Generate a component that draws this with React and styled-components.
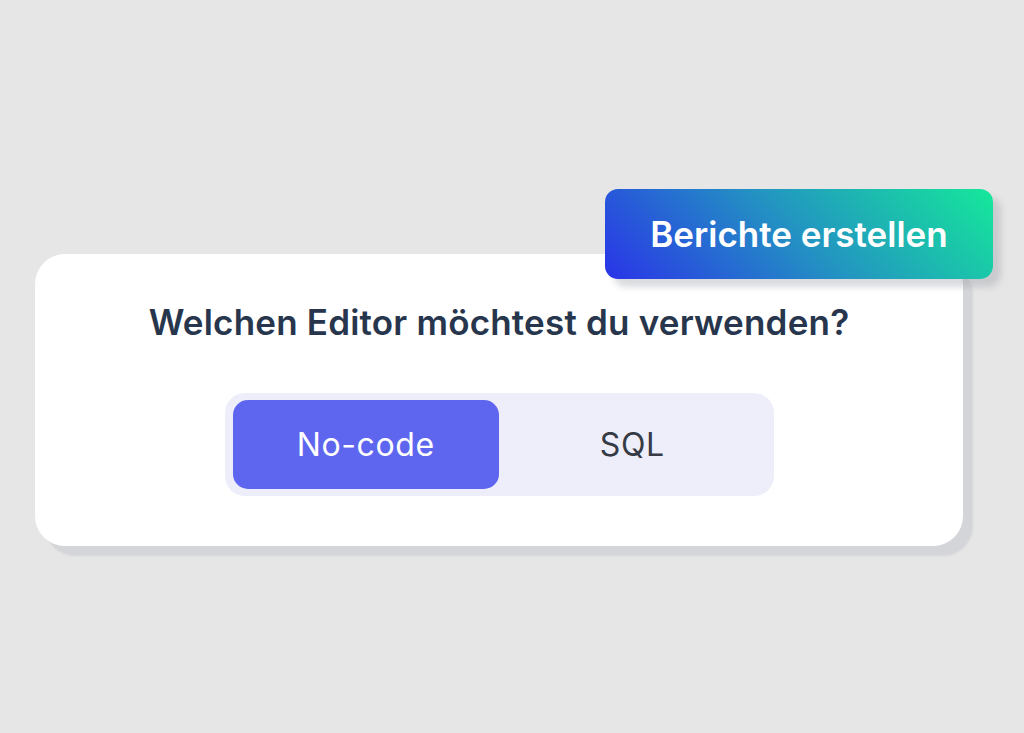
import React from 'react';
import styled, { createGlobalStyle } from 'styled-components';

const GlobalStyle = createGlobalStyle`
  html, body {
    margin: 0;
    padding: 0;
    background: #e6e6e6;
    font-family: Inter, "Noto Sans", sans-serif;
  }
`;

const Page = styled.main`
  width: 1024px;
  height: 733px;
  box-sizing: border-box;
  padding: 254px 0 0 35px;
  overflow: hidden;
`;

const Card = styled.section`
  position: relative;
  width: 928px;
  height: 292px;
  box-sizing: border-box;
  padding: 47px 0 0;
  background: #ffffff;
  border-radius: 30px;
  box-shadow: 10px 10px 2px rgba(190, 192, 200, 0.45);
  display: flex;
  flex-direction: column;
  align-items: center;
`;

const Title = styled.h2`
  margin: 0;
  font-size: 35px;
  line-height: 42px;
  letter-spacing: 0.2px;
  font-weight: 600;
  color: #27364d;
`;

const Toggle = styled.div`
  margin-top: 50px;
  width: 549px;
  height: 103px;
  box-sizing: border-box;
  padding: 7px 8px;
  background: #eeeefb;
  border-radius: 20px;
  display: grid;
  grid-template-columns: 1fr 1fr;
`;

const Option = styled.button`
  border: 0;
  border-radius: 15px;
  font-family: inherit;
  font-size: 32px;
  letter-spacing: 0.6px;
  font-weight: 400;
  background: ${p => (p.active ? '#5e66ef' : 'transparent')};
  color: ${p => (p.active ? '#ffffff' : '#363a44')};
  cursor: pointer;
`;

const Badge = styled.div`
  position: absolute;
  top: -65px;
  right: -30px;
  width: 388px;
  height: 90px;
  border-radius: 13px;
  background: linear-gradient(45deg, #2a34e8 0%, #2393c2 50%, #15e89a 100%);
  box-shadow: 8px 8px 6px rgba(150, 152, 160, 0.35);
  display: flex;
  align-items: center;
  justify-content: center;
  color: #ffffff;
  font-size: 35px;
  font-weight: 600;
`;

export default function App() {
  return (
    <>
      <GlobalStyle />
      <Page>
        <Card>
          <Badge>Berichte erstellen</Badge>
          <Title>Welchen Editor möchtest du verwenden?</Title>
          <Toggle>
            <Option active>No-code</Option>
            <Option>SQL</Option>
          </Toggle>
        </Card>
      </Page>
    </>
  );
}
